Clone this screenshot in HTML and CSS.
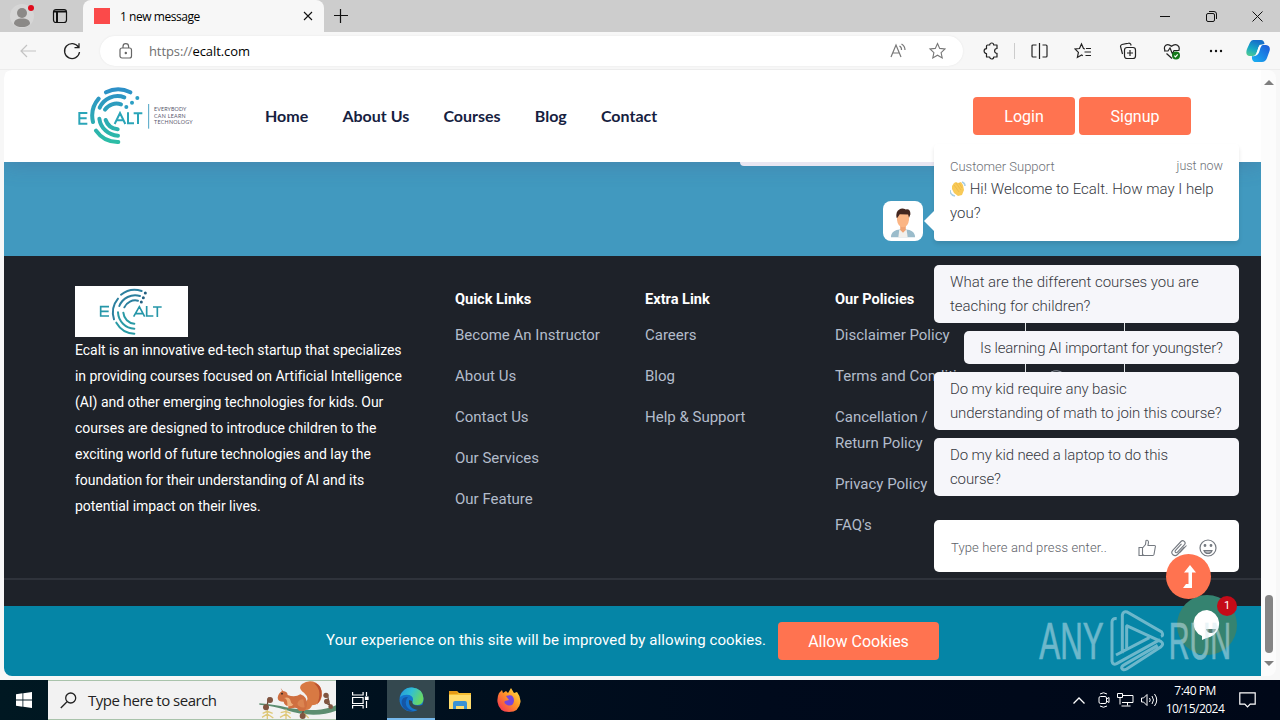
FILE: index.html
```html
<!DOCTYPE html>
<html lang="en">
<head>
  <meta charset="UTF-8">
  <meta name="viewport" content="width=device-width, initial-scale=1">
  <title>1 new message</title>
  <link rel="stylesheet" href="styles.css">
</head>
<body>
  <!-- Browser tabs -->
  <div class="tabbar">
    <div class="tab-tools">
      <svg class="profile" width="26" height="26" viewBox="0 0 26 26">
        <circle cx="13" cy="13" r="12" fill="#d6d6d6"/>
        <circle cx="13" cy="10" r="5" fill="#8b8987"/>
        <path d="M5 21c0-4 3-5.500 8-5.500s8 1.500 8 5.500c-2 2.500-5 3-8 3s-6-.5-8-3z" fill="#8b8987"/>
        <circle cx="22" cy="5" r="3" fill="#e00b1c"/>
      </svg>
      <svg width="16" height="16" viewBox="0 0 16 16" fill="none" stroke="#111" stroke-width="1.200">
        <rect x="1.500" y="1.500" width="13" height="13" rx="2.500"/>
        <path d="M2 3.500h12M5 3v11" stroke-width="2"/>
      </svg>
    </div>
    <div class="tab">
      <span class="favicon"></span>
      <span class="tab-title">1 new message</span>
      <svg width="10" height="10" viewBox="0 0 10 10" stroke="#111" stroke-width="1.100"><path d="M1 1l8 8M9 1l-8 8"/></svg>
    </div>
    <svg class="new-tab" width="14" height="14" viewBox="0 0 14 14" stroke="#111" stroke-width="1.200"><path d="M6.500 0v14M0 6.500h14"/></svg>
    <div class="window-buttons">
      <svg width="11" height="11" viewBox="0 0 11 11" stroke="#111"><path d="M0 5.500h10"/></svg>
      <svg width="11" height="11" viewBox="0 0 11 11" fill="none" stroke="#111"><rect x=".5" y="2.500" width="8" height="8" rx="1.500"/><path d="M3 .5h5a2.500 2.500 0 0 1 2.500 2.500v5"/></svg>
      <svg width="11" height="11" viewBox="0 0 11 11" stroke="#111"><path d="M.5.5l10 10M10.500.5l-10 10"/></svg>
    </div>
  </div>

  <!-- Address bar -->
  <div class="toolbar">
    <svg width="20" height="20" viewBox="0 0 20 20" fill="none" stroke="#c3c3c3" stroke-width="1.200"><path d="M18 10H3M9 4l-6 6 6 6"/></svg>
    <svg width="20" height="20" viewBox="0 0 20 20" fill="none" stroke="#222" stroke-width="1.300"><path d="M16.500 6.200A7.500 7.500 0 1 0 17.500 11M17 2.300v4.400h-4.500"/></svg>
    <div class="address">
      <svg width="14" height="16" viewBox="0 0 14 16" fill="none" stroke="#666" stroke-width="1.200"><rect x="1" y="5" width="11.500" height="10" rx="2"/><path d="M4 5V3.500a2.800 2.800 0 0 1 5.600 0V5"/><circle cx="6.800" cy="10" r=".6" fill="#666"/></svg>
      <span class="url"><i>https://</i>ecalt.com</span>
      <svg width="18" height="18" viewBox="0 0 18 18" fill="none" stroke="#777" stroke-width="1.200"><path d="M2 15L7 3l5 12M4 11h6M10.500 4a4 4 0 0 1 2 4M12.500 2a7 7 0 0 1 3.500 6"/></svg>
      <svg width="18" height="18" viewBox="0 0 18 18" fill="none" stroke="#777" stroke-width="1.100"><path d="M9.500 1.500l2.200 4.900 5.300.6-3.900 3.600 1.100 5.300-4.700-2.700-4.700 2.700 1.100-5.300L2 7l5.300-.6z"/></svg>
    </div>
    <div class="actions">
      <svg width="18" height="18" viewBox="0 0 18 18" fill="none" stroke="#222" stroke-width="1.200"><path d="M5.500 3h2.200a2 2 0 0 1 4 0H15v3.500a2.400 2.400 0 0 0 0 4.800V15h-3.300a2 2 0 0 1-4 0H4.500v-3.500a2.400 2.400 0 0 1 0-4.800V4q0-1 1-1z" stroke-linejoin="round"/></svg>
      <span class="divider"></span>
      <svg width="18" height="18" viewBox="0 0 18 18" fill="none" stroke="#222" stroke-width="1.200"><path d="M6.500 3H3a1 1 0 0 0-1 1v10a1 1 0 0 0 1 1h3.500M12.500 3H16a1 1 0 0 1 1 1v10a1 1 0 0 1-1 1h-3.500M9.500 1v16"/></svg>
      <svg width="18" height="18" viewBox="0 0 18 18" fill="none" stroke="#222" stroke-width="1.200"><path d="M11 7L9.500 6.500 7.500 2 5.500 6.500 1 7l3.400 3.400-1 5 4.200-2.500 1.200.8M12 6.500h5M10.500 10H17M11.500 13.500H17"/></svg>
      <svg width="18" height="18" viewBox="0 0 18 18" fill="none" stroke="#222" stroke-width="1.200"><rect x="5.500" y="5.500" width="11" height="11" rx="2.500"/><path d="M11 8v6M8 11h6M3.500 12L1.500 4.500a2 2 0 0 1 1.500-2l6.500-1.300a2 2 0 0 1 2.400 1.500l.2.800"/></svg>
      <svg width="18" height="18" viewBox="0 0 18 18" fill="none" stroke="#222" stroke-width="1.200"><path d="M2 8.500C0 4 4 .5 8.500 4.300 13 .5 17.500 4 15.800 8.500M1 9h4l2-3 2.500 6L11 8.500h5.500M3.500 11.500L9 16.500"/><circle cx="13" cy="13.500" r="4" fill="#16791b" stroke="none"/><path d="M11.300 13.600l1.200 1.200 2.200-2.400" stroke="#fff"/></svg>
      <svg width="18" height="18" viewBox="0 0 18 18" fill="#111"><circle cx="4" cy="9" r="1.200"/><circle cx="9" cy="9" r="1.200"/><circle cx="14" cy="9" r="1.200"/></svg>
      <svg width="24" height="24" viewBox="0 0 24 24">
        <defs>
          <linearGradient id="copA" x1="0" y1="1" x2=".4" y2="0"><stop offset="0" stop-color="#5ad08a"/><stop offset=".5" stop-color="#16a8c5"/><stop offset="1" stop-color="#1670c9"/></linearGradient>
          <linearGradient id="copB" x1="0" y1="1" x2="1" y2="0"><stop offset="0" stop-color="#19b4f2"/><stop offset="1" stop-color="#1d57d8"/></linearGradient>
        </defs>
        <path d="M7 1h8q3 0 3.500 4l-5 1-3 8q-1 3-4 3H3Q-1 16 1 10L4 3.500Q5 1 7 1z" fill="url(#copA)"/>
        <path d="M17 6h3q5 1 3.500 6L21 19q-1.500 4-5 4H8.500Q5.500 22 6 17q4 1 5-3l3-6q1-2 3-2z" fill="url(#copB)"/>
        <path d="M12.500 8q1-2 3.500-2-1.500 2-2.500 6-1 4-4.500 5 1.500-2 3.500-9z" fill="#fff"/>
      </svg>
    </div>
  </div>

  <!-- Web page -->
  <div class="viewport">
    <div class="page">
      <header class="site-header">
        <svg class="logo" width="120" height="60" viewBox="50 45 360 180" fill="none">
          <defs>
            <linearGradient id="brand" gradientUnits="userSpaceOnUse" x1="0" y1="55" x2="0" y2="220"><stop offset="0" stop-color="#2d8fc8"/><stop offset="1" stop-color="#2cbea5"/></linearGradient>
          </defs>
          <g stroke="url(#brand)" stroke-width="12" stroke-linecap="round">
            <path d="M137 67A79 79 0 0 1 210 67M115 86A79 79 0 0 0 98 156M107 182A79 79 0 0 0 174 216"/>
            <path d="M118 113A59 59 0 0 1 192 82M117 146A59 59 0 0 0 173 197"/>
            <path d="M134 119A42 42 0 0 1 182 103M136 150A42 42 0 0 0 172 178"/>
          </g>
          <g fill="#2c9fc4"><circle cx="198" cy="111" r="6"/><circle cx="215" cy="98" r="6"/><circle cx="231" cy="84" r="6"/></g>
          <g stroke="#2ba5b8" stroke-width="6"><path d="M81 129H57v32h24M57 145h22M163 162l16-33 16 33M170 151h18M203 127v33h18M220 130h26M233 130v32"/></g>
          <path d="M265 102v74" stroke="#4ba3c4" stroke-width="3"/>
          <g class="tagline"><text x="281" y="122" textLength="97">EVERYBODY</text><text x="281" y="143" textLength="95">CAN LEARN</text><text x="281" y="163" textLength="116">TECHNOLOGY</text></g>
        </svg>
        <nav>
          <a>Home</a>
          <a>About Us</a>
          <a>Courses</a>
          <a>Blog</a>
          <a>Contact</a>
        </nav>
        <div class="auth">
          <button class="btn login">Login</button>
          <button class="btn signup">Signup</button>
        </div>
      </header>

      <section class="band"><div class="band-card"></div></section>

      <footer class="site-footer">
        <div class="footer-grid">
          <div class="about">
            <svg width="113" height="51" viewBox="225 438 339 153" fill="none">
              <path fill="#fff" d="M225 438h339v153H225z"/>
              <g stroke="#2b7f9e" stroke-width="6" stroke-linecap="round">
                <path d="M363 464A66 66 0 0 1 425 453M354 476A66 66 0 0 0 342 538"/>
                <path d="M358 498A51 51 0 0 1 420 468M373 502A36 36 0 0 1 414 482"/>
                <path stroke="#2a9aa5" d="M349 548A66 66 0 0 0 403 581M354 517A51 51 0 0 0 403 566M370 518A36 36 0 0 0 403 551"/>
              </g>
              <g fill="#235f80"><circle cx="436" cy="459" r="4.500"/><circle cx="430" cy="473" r="4.500"/><circle cx="424" cy="486" r="4.500"/></g>
              <path d="M327 500h-25v28h25M302 514h24M401 530l17-30 16 30M408 521h20M440 498v30h20M459 501h26M472 501v30" stroke="#2596a8" stroke-width="5"/>
            </svg>
            <p>Ecalt is an innovative ed-tech startup that specializes<br>in providing courses focused on Artificial Intelligence<br>(AI) and other emerging technologies for kids. Our<br>courses are designed to introduce children to the<br>exciting world of future technologies and lay the<br>foundation for their understanding of AI and its<br>potential impact on their lives.</p>
          </div>
          <div class="links">
            <h4>Quick Links</h4>
            <a>Become An Instructor</a>
            <a>About Us</a>
            <a>Contact Us</a>
            <a>Our Services</a>
            <a>Our Feature</a>
          </div>
          <div class="links">
            <h4>Extra Link</h4>
            <a>Careers</a>
            <a>Blog</a>
            <a>Help &amp; Support</a>
          </div>
          <div class="links">
            <h4>Our Policies</h4>
            <a>Disclaimer Policy</a>
            <a class="nowrap">Terms and Conditions</a>
            <a>Cancellation /<br>Return Policy</a>
            <a>Privacy Policy</a>
            <a>FAQ's</a>
          </div>
          <div class="badge-box">
            <svg width="14" height="4" viewBox="0 0 14 4" fill="none" stroke="#8f959e"><path d="M0 2q6-3 12 1"/></svg>
          </div>
        </div>
        <div class="copyright"></div>
      </footer>

      <div class="cookies">
        <span>Your experience on this site will be improved by allowing cookies.</span>
        <button class="btn allow">Allow Cookies</button>
      </div>

      <!-- Chat widget -->
      <div class="chat">
        <div class="message">
          <div class="meta"><span>Customer Support</span><span class="time">just now</span></div>
          <div class="text"><svg width="16" height="16" viewBox="0 0 16 16"><path d="M2 5l2-3 2-1 2 1 3-1 2 3 1 5-2 5-4 1-4-3-2-4z" fill="#f8ca58"/><path d="M4 4l5 7M6 2l5 7M9 2l3 5" stroke="#f0bb48"/><path d="M0 9q0 5 5 6M12 1q3 1 3 4" fill="none" stroke="#a9cfe6" stroke-width="1.500"/></svg> Hi! Welcome to Ecalt. How may I help you?</div>
          <div class="avatar">
            <svg width="26" height="31" viewBox="0 0 28 32">
              <path d="M1 32q0-6 6-8l7-1 7 1q6 2 6 8z" fill="#9bbccb"/>
              <path d="M9 32l1-8h8l1 8z" fill="#f2f0ec"/>
              <path d="M11 17h6v7l-3 3-3-3z" fill="#f0a474"/>
              <path d="M7.500 8q0-5 6.500-5t6.500 5v5q-1 8-6.500 8t-6.500-8z" fill="#fbb584"/>
              <path d="M7 11q-1-7 3-9 3-2 7 0 5-1 5 5l-1.500 4-1-3.500-9-.5L8 11z" fill="#43261f"/>
            </svg>
          </div>
        </div>
        <div class="chip">What are the different courses you are teaching for children?</div>
        <div class="chip short">Is learning AI important for youngster?</div>
        <div class="chip">Do my kid require any basic<br>understanding of math to join this course?</div>
        <div class="chip">Do my kid need a laptop to do this<br>course?</div>
        <div class="composer">
          <span>Type here and press enter..</span>
          <svg width="18" height="18" viewBox="0 0 18 18" fill="none" stroke="#747980" stroke-width="1.100"><path d="M1 8.500h3.500v8H1zM4.500 9l3-3.500L8 1.500q2-1 2.500 1.500L10 6.500h6.500q1 0 .9 1l-1.400 8q-.2 1-1.200 1H6l-1.500-1"/></svg>
          <svg width="18" height="18" viewBox="0 0 18 18" fill="none" stroke="#747980" stroke-width="1.100"><path d="M14.500 8l-7 7.500c-3 3-7.500-1-4.800-4.200L11 2.500c2-2.200 5.500.8 3.500 3.200l-7 7.500c-1.300 1.400-3.300-.4-2-1.800l6-6.500M16.500 6.500l-6.500 7"/></svg>
          <svg width="18" height="18" viewBox="0 0 18 18" fill="none" stroke="#747980" stroke-width="1.200"><circle cx="9" cy="9" r="8"/><path d="M5 11.500h8q-1 3-4 3t-4-3z" fill="#b5b8bc"/><circle cx="6" cy="6.500" r=".8" fill="#747980"/><circle cx="12" cy="6.500" r=".8" fill="#747980"/></svg>
        </div>
      </div>

      <div class="to-top">
        <svg width="14" height="24" viewBox="0 0 14 24" fill="#fff"><path d="M8 0l6 7.500h-4V23H1l3-4h2.500V7.500H2z"/></svg>
      </div>
      <div class="chat-bubble">
        <svg width="28" height="30" viewBox="0 0 28 30"><path d="M14 0a14 14 0 0 1 3 27q-4 1-8 3v-4A13.500 13.500 0 0 1 14 0z" fill="#fff"/><path d="M13 19h10q-1 4-5 4t-5-4z" fill="#577d74"/></svg>
      </div>
      <span class="unread">1</span>

      <svg class="watermark" width="194" height="64" viewBox="24 27 582 192" fill="none">
        <g class="watermark-text">
          <text transform="translate(28 177) scale(.61 1)">ANY</text>
          <text transform="translate(416 177) scale(.56 1)">RUN</text>
        </g>
        <path d="M260 56q-14-2-14 10v118q2 12 14 7l130-72M277 160V45q2-12 14-9l104 60q7 10-2 13M288 76l104 48q12 8 0 17L290 207q-12 6-15-3 0-6 8-10l100-58M258 165l100-52M290 76v75"/>
      </svg>
    </div>
    <div class="scrollbar">
      <svg width="10" height="5" viewBox="0 0 10 5" fill="#7e7e7e"><path d="M5 0l5 5H0z"/></svg>
      <span class="thumb"></span>
      <svg width="10" height="5" viewBox="0 0 10 5" fill="#7e7e7e"><path d="M0 0h10L5 5z"/></svg>
    </div>
  </div>

  <!-- Windows taskbar -->
  <div class="taskbar">
    <div class="start"><svg width="16" height="16" viewBox="0 0 16 16" fill="#fff"><path d="M0 2.300L6.500 1.300v6.300H0zM7.300 1.200L16 0v7.600H7.300zM0 8.400h6.500v6.300L0 13.800zM7.300 8.400H16V16l-8.700-1.200z"/></svg></div>
    <div class="search">
      <svg width="17" height="17" viewBox="0 0 17 17" fill="none" stroke="#222" stroke-width="1.300"><circle cx="10.700" cy="6" r="5"/><path d="M7 9.800L.8 16"/></svg>
      <span>Type here to search</span>
      <svg class="squirrel" width="78" height="39" viewBox="24 15 234 117" fill="none">
        <path d="M28 82q50 4 80 12 50 10 90 8 30-1 60-14v16q-30 12-68 12-40 0-82-14-35-12-80-16z" fill="#5d8d70"/>
        <path d="M52 85l4-20M240 95l-8-40M160 105l-4 12M225 80l20 10" stroke="#6b4a38" stroke-width="4"/>
        <path d="M38 112l14-6 16 6M36 124l16-10 18 12M52 100v30M92 110l16-4 14 6M90 124l18-10 14 12M108 100v30M152 126l12-12 12 12" stroke="#dec878" stroke-width="4"/>
        <g fill="#805440"><circle cx="60" cy="72" r="9"/><circle cx="48" cy="94" r="9"/><circle cx="228" cy="58" r="8"/><circle cx="230" cy="76" r="8"/><circle cx="242" cy="92" r="7"/><circle cx="158" cy="120" r="9"/></g>
        <path d="M160 84q24-14 2-34-20-14-6-26 20-14 42-4 22 14 16 46-6 22-28 22-4 14-20 14z" fill="#d87943"/>
        <path d="M192 22q28 22 8 66 24-30 11-54-7-12-19-12z" fill="#b9502f"/>
        <path d="M92 36l7 9q14 2 14 12 22 8 38-2 22 6 20 34l-6 16h-18q-4-10-12-10l-20 3v-8q-12-1-14-13-18 0-18-12 2-14 13-20z" fill="#cf6f40"/>
        <path d="M112 82q0-14-10-16 14-4 18 4 2 12 10 16-6 6-18 4z" fill="#efb07c"/>
        <path d="M160 70q-16 0-18 14 6 12 22 10z" fill="#db8450"/>
        <circle cx="96" cy="53" r="2.500" fill="#222"/>
      </svg>
    </div>
    <div class="task"><svg width="17" height="17" viewBox="0 0 17 17" fill="none" stroke="#fff" stroke-width="1.200"><path d="M.6 0v3h10.500V0M.6 16.500v-3h10.500v3M.6 5.500h10.500v6H.6zM14.500 0v4M14.500 9v7"/><path d="M13.500 5h2.500v2.500h-2.500z" fill="#fff"/></svg></div>
    <div class="task active">
      <svg width="25" height="25" viewBox="0 0 25 25">
        <defs><linearGradient id="edgeTop" x1="0" y1="0" x2="1" y2=".4"><stop offset="0" stop-color="#2595d9"/><stop offset=".5" stop-color="#31bfd3"/><stop offset="1" stop-color="#68d765"/></linearGradient></defs>
        <circle cx="12.500" cy="12.500" r="12" fill="#1575ce"/>
        <path d="M1 10Q4 0 13 .5q11 1 11.500 11 0 6-6 6.500-6 0-5-3 2-5-3-7-6-1-9.500 2z" fill="url(#edgeTop)"/>
        <path d="M9 10q-4 4-1 10 4 5 10 4-12 2-15-6-2-8 6-8z" fill="#1556a5"/>
        <path d="M13 14q0 6 10 4l1 2-4 3Q9 22 10 13z" fill="#34484f"/>
      </svg>
    </div>
    <div class="task"><svg width="22" height="20" viewBox="0 0 22 20"><path d="M0 1h8l2 2h12v16H0z" fill="#f5bd32"/><path d="M0 5h22v14H0z" fill="#ffdc6d"/><path d="M0 1h8l1 3H0z" fill="#e59a16"/><path d="M4 19v-6q0-2 2-2h10q2 0 2 2v6h-3v-3H7v3z" fill="#3b92d4"/></svg></div>
    <div class="task">
      <svg width="24" height="24" viewBox="0 0 24 24">
        <defs><linearGradient id="fox" x1="1" y1="0" x2="0" y2="1"><stop offset="0" stop-color="#ffe94a"/><stop offset=".45" stop-color="#ff9526"/><stop offset="1" stop-color="#f4235b"/></linearGradient></defs>
        <path d="M2 5l3-3 1 3 3-2 2 2 3-5 3 5 3-1q4 5 3.500 10Q22 24 12 24T.5 14Q0 9 2 5z" fill="url(#fox)"/>
        <path d="M9 8q8-3 8 5-1 6-7 4-4-2-2-4l4-1z" fill="#7646dc"/>
      </svg>
    </div>
    <div class="tray">
      <svg width="12" height="7" viewBox="0 0 12 7" fill="none" stroke="#fff" stroke-width="1.300"><path d="M.5 6.500L6 1l5.500 5.500"/></svg>
      <svg width="12" height="16" viewBox="0 0 12 16" fill="none" stroke="#fff"><rect x="1" y="4.500" width="7.500" height="7" rx="1.500"/><path d="M8.500 7l2.500-1.500v5L8.500 9M2 2q3.500-2.500 7 0M2 14q3.500 2.500 7 0"/></svg>
      <svg width="17" height="14" viewBox="0 0 17 14" fill="none" stroke="#fff"><path d="M5 2.500h11v7H5M.5.5h5v4h-5zM3 4.500v7M10.500 9.500v3M4.500 13h9"/></svg>
      <svg width="17" height="14" viewBox="0 0 17 14" fill="none" stroke="#fff"><path d="M.5 5h2L6 1.500v11L2.500 9h-2zM8.500 5q1.500 2 0 4M11 3q3 4 0 8M13.500 1q4.500 6 0 12"/></svg>
      <div class="clock">7:40 PM<br>10/15/2024</div>
      <svg width="17" height="16" viewBox="0 0 17 16" fill="none" stroke="#fff" stroke-width="1.200"><path d="M.8.8h15.400v11.400h-5L8.500 15l-2.700-2.800h-5z"/></svg>
    </div>
  </div>
</body>
</html>
```
FILE: styles.css
```css
* {
  box-sizing: border-box;
}
body, html {
  margin: 0;
  padding: 0;
  width: 1280px;
  height: 720px;
  overflow: hidden;
  font-family: Roboto, sans-serif;
}
body {
  display: flex;
  flex-direction: column;
  background-color: #f7f7f7;
}
svg {
  display: block;
  flex: none;
}

/* Browser chrome */
.tabbar {
  display: flex;
  align-items: center;
  height: 32px;
  background-color: #cdcdcd;
}
.tab-tools {
  display: flex;
  align-items: center;
  gap: 17px;
  width: 83px;
  padding-left: 9px;
}
.tab {
  display: flex;
  align-items: center;
  width: 241px;
  height: 32px;
  padding: 0 11px;
  border-radius: 8px 8px 0 0;
  background-color: #f7f7f7;
  font: 12px "Open Sans", sans-serif;
}
.favicon {
  width: 16px;
  height: 16px;
  margin-right: 10px;
  background-color: #fb4a4a;
}
.tab-title {
  flex: 1;
  letter-spacing: -0.45px;
}
.new-tab {
  margin-left: 10px;
}
.window-buttons {
  display: flex;
  gap: 35px;
  margin-left: auto;
  padding-right: 17px;
}
.toolbar {
  display: flex;
  align-items: center;
  height: 38px;
  padding-left: 18px;
  border-bottom: 1px solid #ececec;
}
.toolbar > svg {
  margin-right: 24px;
}
.toolbar > svg + svg {
  margin-right: 18px;
}
.address {
  display: flex;
  align-items: center;
  width: 863px;
  height: 30px;
  padding: 0 17px 0 19px;
  border-radius: 15px;
  background-color: #fff;
  box-shadow: 0 0 2px #e4e4e4;
  font: 13px "Open Sans", sans-serif;
}
.address svg:last-child {
  margin-left: 21px;
}
.url {
  flex: 1;
  margin-left: 16px;
  letter-spacing: -0.1px;
}
.url i {
  color: #707070;
  font-style: normal;
}
.actions {
  display: flex;
  align-items: center;
  gap: 26.400px;
  margin-left: 19px;
}
.divider {
  width: 1px;
  height: 16px;
  margin: 0 -12px;
  background-color: #ccc;
}
.actions svg:last-child {
  margin-left: -6px;
}

/* Page viewport */
.viewport {
  display: flex;
  height: 606px;
  margin: 0 4px 4px;
  border-radius: 8px;
  overflow: hidden;
  background-color: #fcfcfc;
}
.page {
  position: relative;
  width: 1257px;
  overflow: hidden;
}
.scrollbar {
  display: flex;
  flex-direction: column;
  align-items: center;
  width: 15px;
  padding: 10px 0;
}
.thumb {
  width: 8px;
  height: 58px;
  margin: auto 0 8px;
  border-radius: 4px;
  background-color: #858585;
}
.btn {
  height: 38px;
  border: none;
  border-radius: 4px;
  background-color: #ff7350;
  color: #fff;
  font: 16px Roboto, sans-serif;
}
.site-header {
  position: relative;
  display: flex;
  align-items: center;
  height: 92px;
  padding: 0 70px 0 73px;
  background-color: #fff;
  box-shadow: 0 2px 20px rgba(80, 80, 130, 0.3);
}
.logo {
  margin-bottom: 2px;
}
.tagline {
  fill: #56566c;
  font: 16px Lato, sans-serif;
}
nav {
  display: flex;
  gap: 34.200px;
  margin: 0 0 2px 68px;
  color: #16213f;
  font: bold 16px Lato, sans-serif;
  white-space: nowrap;
}
.auth {
  display: flex;
  gap: 4px;
  margin-left: auto;
}
.login {
  width: 102px;
}
.signup {
  width: 112px;
}
.band {
  height: 94px;
  padding-left: 736px;
  background-color: #4199bf;
}
.band-card {
  position: relative;
  width: 300px;
  height: 4px;
  border-radius: 0 0 4px 4px;
  background-color: #e9e6f1;
}
.site-footer {
  height: 350px;
  background-color: #1e2229;
}
.footer-grid {
  display: grid;
  grid-template-columns: 380px 190px 190px 190px 100px;
  height: 322px;
  padding: 30px 0 0 71px;
  color: #fff;
  font-size: 15px;
  line-height: 26px;
}
.about p {
  margin: 0;
  font-size: 14px;
  letter-spacing: -0.04px;
  white-space: nowrap;
}
.links h4 {
  margin: 0 0 10px;
  font-size: 14.600px;
  font-weight: 700;
}
.links a {
  display: block;
  margin-bottom: 15px;
  color: #b3bccb;
}
.links .nowrap {
  width: 136px;
  white-space: nowrap;
}
.badge-box {
  height: 84px;
  margin-top: 16px;
  padding: 68px 0 0 25px;
  border: solid #e4e6e8;
  border-width: 0 1px;
}
.copyright {
  height: 28px;
  border-top: 2px solid #2f333b;
}
.cookies {
  display: flex;
  align-items: center;
  gap: 12px;
  height: 70px;
  padding-left: 322px;
  background-color: #0585a6;
  color: #fff;
  font-size: 15px;
}
.cookies span {
  width: 440px;
  padding-bottom: 2px;
  white-space: nowrap;
  letter-spacing: 0.1px;
}
.allow {
  width: 161px;
}

/* Chat widget */
.chat {
  position: absolute;
  top: 74px;
  right: 22px;
  display: flex;
  flex-direction: column;
  align-items: flex-end;
  gap: 8px;
  width: 305px;
  color: #36393f;
  font-size: 15px;
  font-weight: 300;
  line-height: 24px;
}
.message {
  position: relative;
  width: 305px;
  height: 97px;
  margin-bottom: 16px;
  padding: 12px 16px;
  border-radius: 4px;
  background-color: #fff;
  box-shadow: 0 3px 4px rgba(0, 0, 0, 0.1);
}
.message::before {
  content: "";
  position: absolute;
  top: 67px;
  left: -10px;
  border: solid transparent;
  border-width: 10px 10px 10px 0;
  border-right-color: #fff;
}
.meta {
  display: flex;
  justify-content: space-between;
  height: 21px;
  color: #6d7177;
  font-size: 13px;
  line-height: 22px;
}
.meta .time {
  font-size: 12.500px;
  line-height: 20px;
}
.text svg {
  display: inline-block;
  vertical-align: -3px;
}
.avatar {
  position: absolute;
  top: 57px;
  left: -51px;
  display: flex;
  align-items: flex-end;
  justify-content: center;
  width: 40px;
  height: 40px;
  padding-bottom: 3px;
  border-radius: 8px;
  background-color: #fff;
}
.chip {
  width: 305px;
  padding: 5px 16px;
  border-radius: 5px;
  background-color: #f6f6fa;
  letter-spacing: -0.12px;
}
.chip:nth-child(2) {
  letter-spacing: -0.03px;
}
.chip.short {
  width: 275px;
  height: 33px;
  letter-spacing: -0.22px;
  white-space: nowrap;
}
.composer {
  display: flex;
  align-items: center;
  width: 305px;
  height: 52px;
  margin-top: 16px;
  padding: 3px 22px 0 17px;
  border-radius: 5px;
  background-color: #fff;
  color: #5d6168;
  font-size: 13px;
}
.composer span {
  flex: 1;
  letter-spacing: 0.14px;
}
.composer svg {
  margin-left: 14px;
}
.composer svg + svg + svg {
  margin-left: 11px;
}
.to-top {
  position: absolute;
  top: 484px;
  left: 1162px;
  display: flex;
  align-items: center;
  justify-content: center;
  width: 45px;
  height: 45px;
  border-radius: 50%;
  background-color: #ff7350;
  z-index: 2;
}
.chat-bubble {
  position: absolute;
  top: 525px;
  left: 1173px;
  display: flex;
  align-items: center;
  justify-content: center;
  width: 60px;
  height: 60px;
  border-radius: 50%;
  background-color: #358370;
}
.unread {
  position: absolute;
  top: 526px;
  left: 1213px;
  z-index: 2;
  width: 20px;
  height: 20px;
  border-radius: 50%;
  background-color: #c50b18;
  color: #fff;
  font-size: 11px;
  line-height: 20px;
  text-align: center;
}
.watermark {
  position: absolute;
  top: 539px;
  left: 1034px;
  overflow: visible;
  opacity: 0.5;
  stroke: #d5eaf0;
  stroke-width: 9px;
}
.watermark-text {
  fill: #d5eaf0;
  stroke-width: 2px;
  font: 154px "Liberation Sans", sans-serif;
}

/* Taskbar */
.taskbar {
  display: flex;
  align-items: center;
  height: 40px;
  background: linear-gradient(90deg, #001822, #000a1c 60%, #000818);
  color: #fff;
  font: 12px "Open Sans", sans-serif;
}
.start {
  display: flex;
  justify-content: center;
  width: 48px;
}
.search {
  display: flex;
  align-items: center;
  width: 288px;
  height: 40px;
  padding-left: 12px;
  border: solid #a9c3ab;
  border-width: 1px 0;
  background-color: #f2f2f2;
  color: #222;
  font-size: 15px;
}
.search span {
  margin-left: 11px;
  white-space: nowrap;
  letter-spacing: -0.5px;
}
.squirrel {
  margin-left: auto;
}
.task {
  display: flex;
  align-items: center;
  justify-content: center;
  width: 49px;
  height: 40px;
}
.task.active {
  width: 48px;
  margin-left: 2px;
  border-bottom: 2px solid #76b9ed;
  background-color: #34484f;
}
.tray {
  display: flex;
  align-items: center;
  gap: 7px;
  margin-left: auto;
  padding-right: 24px;
}
.tray > svg:first-child {
  margin-right: 6px;
}
.clock {
  width: 60px;
  line-height: 18px;
  text-align: center;
  letter-spacing: -0.5px;
  white-space: nowrap;
}
.clock + svg {
  margin-left: 7px;
}
```
